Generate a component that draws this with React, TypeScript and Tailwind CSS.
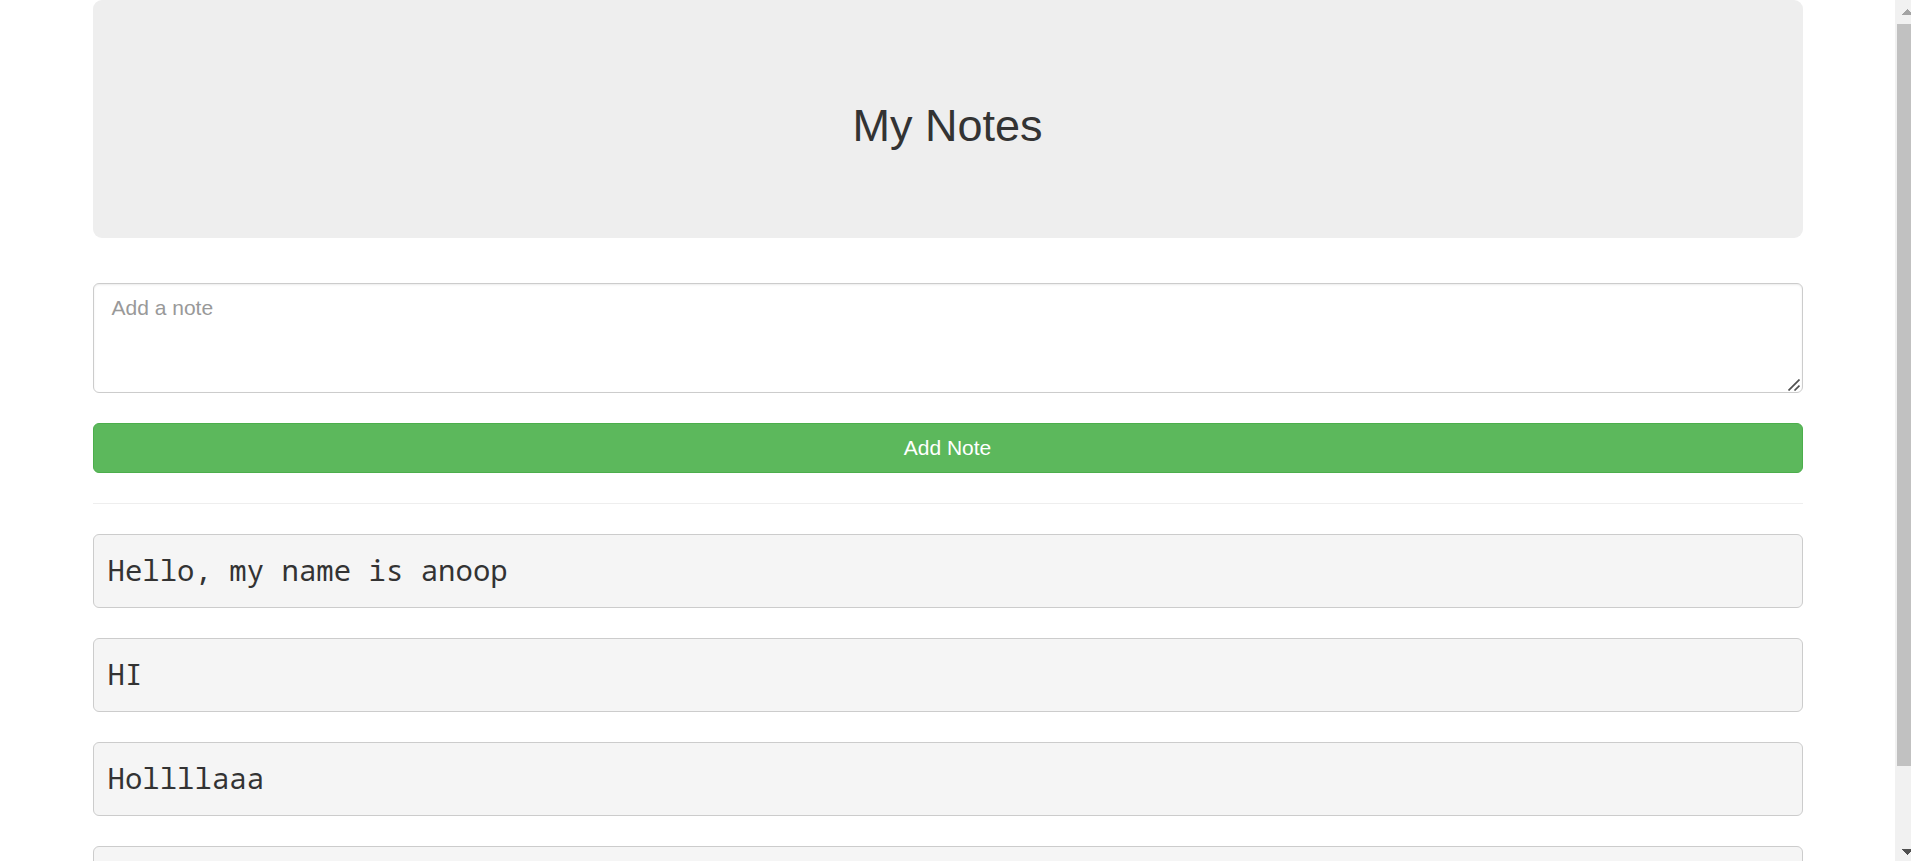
import { useState } from "react";

const initialNotes = ["Hello, my name is anoop", "HI", "Hollllaaa", ""];

function NoteForm({ onAdd }: { onAdd: (text: string) => void }) {
  const [text, setText] = useState("");
  return (
    <form
      onSubmit={(e) => {
        e.preventDefault();
        if (text.trim()) onAdd(text);
        setText("");
      }}
    >
      <div className="relative">
        <textarea
          aria-label="Add a note"
          placeholder="Add a note"
          value={text}
          onChange={(e) => setText(e.target.value)}
          className="block h-[110px] w-full resize-none rounded-md border border-[#ccc] bg-white px-[18px] py-[9px] text-[21px] leading-[30px] text-[#555] shadow-[inset_0_1px_2px_rgba(0,0,0,0.075)] outline-none placeholder:text-[#999]"
        />
        <svg
          className="pointer-events-none absolute right-[3px] bottom-[2px] size-3"
          viewBox="0 0 12 12"
          fill="none"
          stroke="#505050"
          strokeWidth="1.7"
        >
          <path d="M0.5 11.5 11.5 0.5M6.5 11.5 11.5 6.5" />
        </svg>
      </div>
      <button
        type="submit"
        className="mt-[30px] block h-[50px] w-full rounded-md border border-[#4cae4c] bg-[#5cb85c] text-[21px] leading-[30px] text-white"
      >
        Add Note
      </button>
    </form>
  );
}

function ScrollRail() {
  return (
    <div className="flex w-4 shrink-0 flex-col overflow-hidden bg-[#f1f1f1]" aria-hidden="true">
      <svg className="h-6 w-4 shrink-0" viewBox="0 0 16 24" fill="#a3a3a3" shapeRendering="crispEdges">
        <path d="M6.5 15 12.5 9 18.5 15Z" />
      </svg>
      <div className="ml-[2px] grow-[742] bg-[#c1c1c1]" />
      <div className="grow-[71]" />
      <svg className="h-6 w-4 shrink-0" viewBox="0 0 16 24" fill="#505050" shapeRendering="crispEdges">
        <path d="M6.5 12 12.5 18 18.5 12Z" />
      </svg>
    </div>
  );
}

export default function App() {
  const [notes, setNotes] = useState(initialNotes);
  return (
    <div className="flex h-screen overflow-hidden bg-white font-['Liberation_Sans',Arial,sans-serif] text-[#333]">
      <main className="min-w-0 flex-1 overflow-hidden">
        <div className="mx-auto w-full max-w-[1710px]">
          <header className="mb-[45px] rounded-[9px] bg-[#eee] px-[90px] pt-[101px] pb-[87px] text-center">
            <h1 className="text-[45px] leading-[50px]">My Notes</h1>
          </header>
          <NoteForm onAdd={(text) => setNotes([...notes, text])} />
          <hr className="my-[30px] border-[#eee]" />
          <div className="flex flex-col gap-[30px]">
            {notes.map((note, i) => (
              <pre
                key={i}
                className="min-h-[74px] rounded-md border border-[#ccc] bg-[#f5f5f5] px-[14px] pt-[14px] pb-[16px] font-['Noto_Sans_Mono','Liberation_Mono',monospace] text-[29px] leading-[42px] whitespace-pre-wrap"
              >
                {note}
              </pre>
            ))}
          </div>
        </div>
      </main>
      <ScrollRail />
    </div>
  );
}
